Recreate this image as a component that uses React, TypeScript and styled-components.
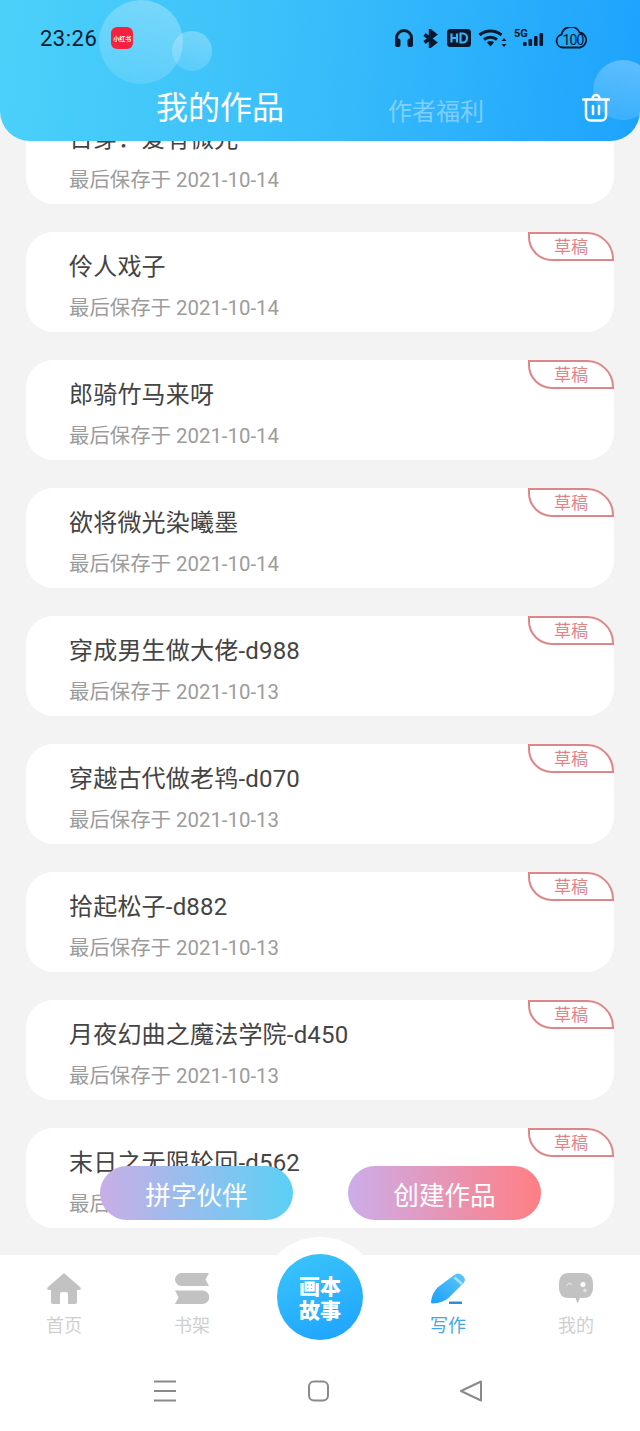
import React from "react";
import styled, {createGlobalStyle} from "styled-components";

const CJK = `"Noto Sans CJK SC", "Noto Sans", sans-serif`;
const LATIN = `Roboto, "Noto Sans CJK SC", sans-serif`;

const GlobalStyle = createGlobalStyle`
  html, body {
    margin: 0;
    padding: 0;
    background: #f3f3f3;
  }
`

const Page = styled.div`
  position: relative;
  width: 640px;
  height: 1431px;
  overflow: hidden;
  display: flex;
  flex-direction: column;
  background: #f3f3f3;
  font-family: ${LATIN};
`

/* header */
const Header = styled.header`
  position: absolute;
  top: 0;
  left: 0;
  right: 0;
  height: 141px;
  overflow: hidden;
  z-index: 3;
  border-radius: 0 0 30px 30px;
  background: linear-gradient(96deg, #4bd1f9 0%, #3bbffa 45%, #1da3fd 100%);
`
const Bubble = styled.div<{$x: number, $y: number, $r: number}>`
  position: absolute;
  left: ${({$x, $r}) => $x - $r}px;
  top: ${({$y, $r}) => $y - $r}px;
  width: ${({$r}) => $r * 2}px;
  height: ${({$r}) => $r * 2}px;
  border-radius: 50%;
  background: linear-gradient(200deg, rgba(255, 255, 255, 0.3), rgba(255, 255, 255, 0.1));
`
const StatusBar = styled.div`
  position: relative;
  height: 76px;
  box-sizing: border-box;
  padding: 0 52px 0 40px;
  display: flex;
  align-items: center;
`
const Clock = styled.span`
  font-size: 22px;
  font-weight: 400;
  letter-spacing: 0.5px;
  color: #08182e;
`
const AppBadge = styled.div`
  width: 22px;
  height: 22px;
  margin-left: 14px;
  border-radius: 6px;
  background: #f5223f;
  color: #fff;
  font-family: ${CJK};
  font-size: 6px;
  font-weight: 700;
  display: flex;
  align-items: center;
  justify-content: center;
  white-space: nowrap;
`
const StatusIcons = styled.div`
  margin-left: auto;
  display: flex;
  align-items: center;
  color: #08182e;
`
const TitleRow = styled.div`
  position: relative;
  display: flex;
  align-items: center;
  height: 58px;
  padding-left: 156px;
`
const MainTitle = styled.span`
  font-family: ${CJK};
  font-size: 32px;
  line-height: 56px;
  color: #fff;
`
const SideTitle = styled.span`
  font-family: ${CJK};
  font-size: 24px;
  margin-left: 104px;
  margin-top: 8px;
  color: rgba(255, 255, 255, 0.4);
`
const TrashButton = styled.div`
  margin-left: 98px;
  margin-top: 4px;
  display: flex;
`

/* list */
const WorkList = styled.main`
  flex: 1;
  min-height: 0;
  overflow: hidden;
  padding: 104px 26px 0;
  display: flex;
  flex-direction: column;
  gap: 28px;
`
const WorkCard = styled.article`
  position: relative;
  flex: none;
  height: 100px;
  box-sizing: border-box;
  padding: 16px 0 0 43px;
  background: #fff;
  border-radius: 27px;
`
const WorkName = styled.div`
  font-size: 24px;
  letter-spacing: 0.2px;
  line-height: 38px;
  color: #444;
  white-space: nowrap;
`
const WorkDate = styled.div`
  margin-top: 8px;
  font-size: 20.4px;
  line-height: 28px;
  color: #9c9c9c;
  white-space: nowrap;
`
const DraftTag = styled.div`
  position: absolute;
  top: 0;
  right: 0;
  width: 86px;
  height: 29px;
  box-sizing: border-box;
  border: 2px solid #df8589;
  border-radius: 0 27px 0 24px;
  padding-left: 24px;
  font-family: ${CJK};
  font-size: 17px;
  line-height: 24px;
  color: #df8589;
`

/* floating buttons */
const FloatButton = styled.div<{$left: number, $from: string, $to: string}>`
  position: absolute;
  z-index: 2;
  top: 1166px;
  left: ${({$left}) => $left}px;
  width: 193px;
  height: 54px;
  border-radius: 27px;
  background: linear-gradient(90deg, ${({$from}) => $from}, ${({$to}) => $to});
  color: #fff;
  font-family: ${CJK};
  font-size: 25.6px;
  display: flex;
  align-items: center;
  justify-content: center;
`

/* bottom */
const BottomArea = styled.footer`
  position: relative;
  flex: none;
  height: 176px;
  background: #fff;
`
const TabRow = styled.nav`
  display: grid;
  grid-template-columns: repeat(5, 128px);
  height: 100px;
`
const Tab = styled.div<{$active?: boolean}>`
  display: flex;
  flex-direction: column;
  align-items: center;
  padding-top: 18px;
  font-family: ${CJK};
  font-size: 18px;
  line-height: 26px;
  color: ${({$active}) => ($active ? "#45a6e6" : "#cfcfcf")};
`
const TabIcon = styled.div`
  height: 32px;
  margin-bottom: 6px;
`
const CenterBump = styled.div`
  position: absolute;
  left: 260px;
  top: -18px;
  width: 120px;
  height: 120px;
  border-radius: 50%;
  background: #fff;
  display: flex;
  align-items: center;
  justify-content: center;
`
const CenterButton = styled.div`
  width: 86px;
  height: 86px;
  border-radius: 50%;
  background: linear-gradient(160deg, #3cc6fb, #1ca2fd);
  color: #fff;
  font-family: ${CJK};
  font-size: 21px;
  font-weight: 900;
  line-height: 24px;
  text-align: center;
  display: flex;
  align-items: center;
  justify-content: center;
`
const NavRow = styled.div`
  display: grid;
  grid-template-columns: 153px 1fr;
  height: 76px;
`
const NavIcons = styled.div`
  display: flex;
  align-items: flex-start;
  gap: 130px;
  padding-top: 25px;
`

const works = [
    {name: "日穿：爱有微光", date: "2021-10-14"},
    {name: "伶人戏子", date: "2021-10-14", draft: true},
    {name: "郎骑竹马来呀", date: "2021-10-14", draft: true},
    {name: "欲将微光染曦墨", date: "2021-10-14", draft: true},
    {name: "穿成男生做大佬-d988", date: "2021-10-13", draft: true},
    {name: "穿越古代做老鸨-d070", date: "2021-10-13", draft: true},
    {name: "拾起松子-d882", date: "2021-10-13", draft: true},
    {name: "月夜幻曲之魔法学院-d450", date: "2021-10-13", draft: true},
    {name: "末日之无限轮回-d562", date: "2021-10-13", draft: true},
]

const SystemIcons = () => <StatusIcons>
    <svg width="20" height="20" viewBox="0 0 20 20" style={{marginRight: 9}}>
        <path d="M2.500 12V10a7.500 7.500 0 0 1 15 0v2" fill="none" stroke="currentColor" strokeWidth="3"/>
        <rect x="1" y="10.500" width="5.500" height="8.500" rx="2" fill="currentColor"/>
        <rect x="13.500" y="10.500" width="5.500" height="8.500" rx="2" fill="currentColor"/>
    </svg>
    <svg width="15" height="19" viewBox="0 0 15 19" style={{marginRight: 9}}>
        <path d="M1.500 5.500 12 13.500 7.500 17V2L12 5.500 1.500 13.500" fill="none" stroke="currentColor" strokeWidth="3.500"/>
    </svg>
    <svg width="24" height="18" viewBox="0 0 24 18" style={{marginRight: 7}}>
        <rect width="24" height="18" rx="3.500" fill="currentColor"/>
        <path d="M4.500 4.500v9M10 4.500v9M4.500 9H10" stroke="#3ab2fb" strokeWidth="2.200" fill="none"/>
        <path d="M13.500 4.500v9h2.500a4 4.500 0 0 0 0-9z" stroke="#3ab2fb" strokeWidth="2.200" fill="none"/>
    </svg>
    <svg width="30" height="20" viewBox="0 0 30 20" style={{marginRight: 6}}>
        <path d="M1.500 7a17 17 0 0 1 22 0" fill="none" stroke="currentColor" strokeWidth="3"/>
        <path d="M6 11.500a10.500 10.500 0 0 1 13 0" fill="none" stroke="currentColor" strokeWidth="3"/>
        <path d="M12.500 18.500 9 14.500a5 5 0 0 1 7 0z" fill="currentColor"/>
        <path d="M26 10l2.500 3h-5zM26 19l2.500-3h-5z" fill="currentColor"/>
    </svg>
    <svg width="30" height="22" viewBox="0 0 30 22" style={{marginRight: 11}}>
        <text x="0" y="10" fontFamily="Roboto, sans-serif" fontSize="11" fontWeight="700" fill="currentColor">5G</text>
        <rect x="9" y="15" width="3.600" height="4" rx="1" fill="currentColor"/>
        <rect x="14.500" y="12" width="3.600" height="7" rx="1" fill="currentColor"/>
        <rect x="20" y="9" width="3.600" height="10" rx="1" fill="currentColor"/>
        <rect x="25.500" y="6" width="3.600" height="13" rx="1" fill="currentColor"/>
    </svg>
    <svg width="33" height="22" viewBox="0 0 33 22">
        <path d="M8 20.500a6.500 6.500 0 0 1-1.500-12.800A9.500 9.500 0 0 1 24.500 5.500a7.600 7.600 0 0 1 .5 15z" fill="none" stroke="currentColor" strokeWidth="1.800"/>
        <text x="18" y="17.500" textAnchor="middle" fontFamily="Roboto, sans-serif" fontSize="14" letterSpacing="-0.8" fill="currentColor">100</text>
    </svg>
</StatusIcons>

const TrashIcon = () => <svg width="28" height="30" viewBox="0 0 28 30">
    <path d="M1 7.500h26" stroke="#fff" strokeWidth="2.500" strokeLinecap="round"/>
    <path d="M10.500 6.500a3.500 3.500 0 0 1 7 0" fill="none" stroke="#fff" strokeWidth="2.500"/>
    <path d="M4 8v16a4.500 4.500 0 0 0 4.500 4.500h11a4.500 4.500 0 0 0 4.500-4.500V8" fill="none" stroke="#fff" strokeWidth="2.500"/>
    <path d="M11 14v8M17 14v8" stroke="#fff" strokeWidth="2.500" strokeLinecap="round"/>
</svg>

const HomeIcon = () => <svg width="34" height="31" viewBox="0 0 34 31">
    <path fill="#c2c2c2" d="M17 0 33.500 14.500Q34.500 17 32 17H30V29Q30 31 28 31H21V21Q21 19 19 19H15Q13 19 13 21V31H6Q4 31 4 29V17H2Q-.5 17 .5 14.500Z"/>
</svg>

const ShelfIcon = () => <svg width="34" height="31" viewBox="0 0 34 31">
    <path fill="#c2c2c2" d="M6.500 0H34L30.500 6.500 34 13H6.500A6.500 6.500 0 0 1 6.500 0Z"/>
    <path fill="#c2c2c2" d="M0 17.500H27.500A6.750 6.750 0 0 1 27.500 31H0L3.500 24.250Z"/>
</svg>

const PenIcon = () => <svg width="34" height="32" viewBox="0 0 34 32">
    <defs>
        <linearGradient id="penFill" x1="1" y1="0" x2="0" y2="1">
            <stop offset="0" stopColor="#5cc8f8"/>
            <stop offset="1" stopColor="#1c9ffb"/>
        </linearGradient>
    </defs>
    <path fill="url(#penFill)" d="M24 1.500Q27-.5 30 1.500L32.500 3.500Q35 6.500 33 9.500L18 24.500Q12 30 1.500 30.500Q0 30.500 0 29Q1 20 6.500 14.500Z"/>
    <path d="M23.500 4.500 31 11" stroke="#a5e2fb" strokeWidth="2.500"/>
    <rect x="18" y="28.500" width="13" height="2.500" fill="#2a8fe0"/>
</svg>

const ChatIcon = () => <svg width="34" height="32" viewBox="0 0 34 32">
    <path fill="#c2c2c2" d="M10 0H24Q34 0 34 11V15Q34 25 24 25H21L18.500 30.500 16.500 25H10Q0 25 0 15V11Q0 0 10 0Z"/>
    <path d="M7.500 12.500 10.500 10 13 12" fill="none" stroke="#dedede" strokeWidth="1.300"/>
    <circle cx="24" cy="11.500" r="2.500" fill="#fff"/>
    <circle cx="26" cy="17.500" r="1.800" fill="#e2e2e2"/>
</svg>

const App = () => {
    return <Page>
        <GlobalStyle/>
        <Header>
            <Bubble $x={141} $y={42} $r={42}/>
            <Bubble $x={192} $y={51} $r={20}/>
            <Bubble $x={623} $y={90} $r={30}/>
            <StatusBar>
                <Clock>23:26</Clock>
                <AppBadge>小红书</AppBadge>
                <SystemIcons/>
            </StatusBar>
            <TitleRow>
                <MainTitle>我的作品</MainTitle>
                <SideTitle>作者福利</SideTitle>
                <TrashButton><TrashIcon/></TrashButton>
            </TitleRow>
        </Header>
        <WorkList>
            {works.map(({name, date, draft}, index) => {
                return <WorkCard key={index}>
                    <WorkName>{name}</WorkName>
                    <WorkDate>最后保存于 {date}</WorkDate>
                    {draft && <DraftTag>草稿</DraftTag>}
                </WorkCard>
            })}
        </WorkList>
        <FloatButton $left={100} $from="#c9aee6" $to="#5bd0f6">拼字伙伴</FloatButton>
        <FloatButton $left={348} $from="#ccade9" $to="#ff7e84">创建作品</FloatButton>
        <BottomArea>
            <CenterBump>
                <CenterButton>画本<br/>故事</CenterButton>
            </CenterBump>
            <TabRow>
                <Tab><TabIcon><HomeIcon/></TabIcon>首页</Tab>
                <Tab><TabIcon><ShelfIcon/></TabIcon>书架</Tab>
                <div/>
                <Tab $active><TabIcon><PenIcon/></TabIcon>写作</Tab>
                <Tab><TabIcon><ChatIcon/></TabIcon>我的</Tab>
            </TabRow>
            <NavRow>
                <div/>
                <NavIcons>
                    <svg width="24" height="22" viewBox="0 0 24 22">
                        <path d="M1 1.500h22M1 11h22M1 20.500h22" stroke="#8a8a8a" strokeWidth="2"/>
                    </svg>
                    <svg width="22" height="22" viewBox="0 0 22 22">
                        <rect x="2" y="1.500" width="19" height="19" rx="5" fill="none" stroke="#8a8a8a" strokeWidth="2"/>
                    </svg>
                    <svg width="24" height="22" viewBox="0 0 24 22">
                        <path d="M2 11 22 1.500V20.500Z" fill="none" stroke="#8a8a8a" strokeWidth="2" strokeLinejoin="round"/>
                    </svg>
                </NavIcons>
            </NavRow>
        </BottomArea>
    </Page>
}

export default App
